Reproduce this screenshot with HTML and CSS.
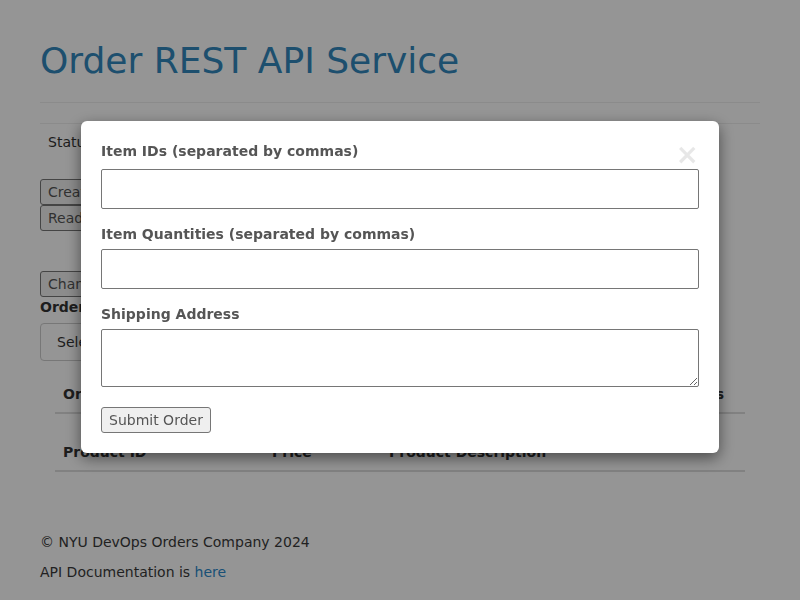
FILE: index.html
```html
<!DOCTYPE html>
<html>
<head>
<meta charset="utf-8">
<title>Order REST API Service</title>
<link rel="stylesheet" href="styles.css">
</head>
<body>
<div class="container">
  <div class="page-header"><h1>Order REST API Service</h1></div>
  <hr class="rule">
  <div class="flash">Status: Ready</div>
  <div class="actions">
    <button class="btn">Create Order</button><br>
    <button class="btn">Read Order</button>
  </div>
  <div class="actions second">
    <button class="btn">Change Order Status</button>
  </div>
  <label class="field-label">Order Status:</label>
  <div class="select">Select...</div>
  <div class="tables">
    <table class="table">
      <thead><tr><th>Order ID</th><th>Customer ID</th><th>Created At</th><th>Address</th><th class="last">Items</th></tr></thead>
    </table>
    <table class="table">
      <thead><tr><th class="c1">Product ID</th><th class="c2">Price</th><th>Product Description</th></tr></thead>
    </table>
  </div>
  <footer class="footer">
    <p>© NYU DevOps Orders Company 2024</p>
    <p>API Documentation is <a href="#">here</a></p>
  </footer>
</div>

<div class="backdrop"></div>

<div class="modal">
  <span class="close">×</span>
  <div class="group first">
    <label class="mlabel">Item IDs (separated by commas)</label>
    <input class="input" type="text">
  </div>
  <div class="group">
    <label class="mlabel">Item Quantities (separated by commas)</label>
    <input class="input" type="text">
  </div>
  <div class="group last-group">
    <label class="mlabel">Shipping Address</label>
    <textarea class="textarea"></textarea>
  </div>
  <button class="btn submit">Submit Order</button>
</div>
</body>
</html>
```
FILE: styles.css
```css
* { box-sizing: border-box; }
html, body { margin: 0; padding: 0; }
body {
  font-family: "DejaVu Sans", sans-serif;
  font-size: 14px;
  line-height: 20px;
  color: #333;
  background: #fff;
}
.container {
  width: 750px;
  margin: 0 auto;
  padding: 0 15px;
}
.page-header {
  margin: 40px 0 0;
  padding-bottom: 0;
  border-bottom: 1px solid #eee;
  height: 63px;
}
h1 {
  margin: 0;
  font-size: 36px;
  font-weight: normal;
  line-height: 42px;
  color: #3287bc;
}
.rule {
  border: 0;
  border-top: 1px solid #eee;
  margin: 20px 0 0;
}
.flash {
  padding: 8px 8px;
  height: 55px;
}
.actions { line-height: 0; }
.btn {
  font-family: "DejaVu Sans", sans-serif;
  font-size: 14px;
  line-height: 20px;
  color: #555;
  background: #efefef;
  border: 1px solid #767676;
  border-radius: 3px;
  padding: 1px 7px;
  height: 26px;
  margin: 0;
}
.second { margin-top: 40px; }
.field-label {
  display: block;
  font-weight: bold;
  margin-top: 0;
  line-height: 20px;
}
.select {
  margin-top: 6px;
  width: 220px;
  height: 38px;
  border: 1px solid #ccc;
  border-radius: 4px;
  padding: 8px 16px;
}
.tables { padding: 15px 15px 0; }
.table {
  width: 100%;
  border-collapse: collapse;
  margin-bottom: 20px;
}
.table th {
  text-align: left;
  font-weight: bold;
  padding: 8px;
  line-height: 20px;
  border-bottom: 2px solid #ddd;
}
.table th.last { text-align: right; padding-right: 21px; }
.table .c1 { width: 209px; }
.table .c2 { width: 117px; }
.footer { margin-top: 60px; color: #3a3a3a; }
.footer p { margin: 0 0 10px; }
.footer a { color: #2c8acb; text-decoration: none; }

.backdrop {
  position: fixed;
  inset: 0;
  background: rgba(0, 0, 0, 0.415);
}
.modal {
  position: fixed;
  left: 81px;
  top: 121px;
  width: 638px;
  height: 332px;
  background: #fff;
  border-radius: 6px;
  box-shadow: 0 5px 15px rgba(0, 0, 0, 0.5);
  padding: 20px 20px 20px;
}
.close {
  position: absolute;
  right: 20px;
  top: 20px;
  font-size: 28px;
  font-weight: bold;
  line-height: 28px;
  color: #000;
  opacity: 0.09;
}
.group { margin-bottom: 15px; }
.mlabel {
  display: block;
  font-weight: bold;
  color: #555;
  line-height: 20px;
  margin-bottom: 5px;
}
.first .mlabel { margin-bottom: 8px; }
.input, .textarea {
  display: block;
  width: 598px;
  height: 40px;
  border: 1px solid #767676;
  border-radius: 2px;
  font-family: "DejaVu Sans", sans-serif;
  font-size: 14px;
  margin: 0;
}
.textarea { height: 58px; resize: vertical; }
.last-group { margin-bottom: 20px; }
.submit { height: 26px; margin: 0; }
```
